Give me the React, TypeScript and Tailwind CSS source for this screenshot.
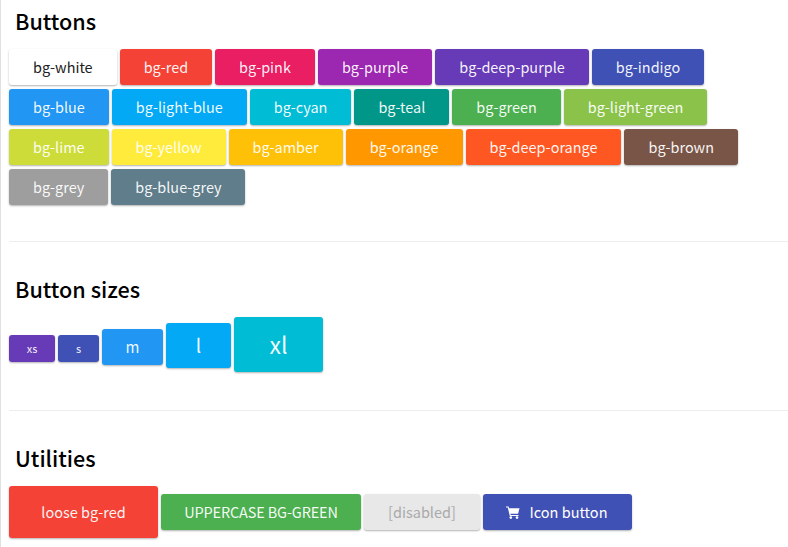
const rows = [
  { label: "bg-white", cls: "bg-white text-[#212121]" },
  { label: "bg-red", cls: "bg-[#f44336] text-white/95" },
  { label: "bg-pink", cls: "bg-[#e91e63] text-white/95" },
  { label: "bg-purple", cls: "bg-[#9c27b0] text-white/95" },
  { label: "bg-deep-purple", cls: "bg-[#673ab7] text-white/95" },
  { label: "bg-indigo", cls: "bg-[#3f51b5] text-white/95" },
  { label: "bg-blue", cls: "bg-[#2196f3] text-white/95" },
  { label: "bg-light-blue", cls: "bg-[#03a9f4] text-white/95" },
  { label: "bg-cyan", cls: "bg-[#00bcd4] text-white/95" },
  { label: "bg-teal", cls: "bg-[#009688] text-white/95" },
  { label: "bg-green", cls: "bg-[#4caf50] text-white/95" },
  { label: "bg-light-green", cls: "bg-[#8bc34a] text-white/95" },
  { label: "bg-lime", cls: "bg-[#cddc39] text-white/95" },
  { label: "bg-yellow", cls: "bg-[#ffeb3b] text-white/95" },
  { label: "bg-amber", cls: "bg-[#ffc107] text-white/95" },
  { label: "bg-orange", cls: "bg-[#ff9800] text-white/95" },
  { label: "bg-deep-orange", cls: "bg-[#ff5722] text-white/95" },
  { label: "bg-brown", cls: "bg-[#795548] text-white/95" },
  { label: "bg-grey", cls: "bg-[#9e9e9e] text-white/95" },
  { label: "bg-blue-grey", cls: "bg-[#607d8b] text-white/95" },
];

const base =
  "flex items-center justify-center rounded-[3px] shadow-[0_1px_2px_rgba(0,0,0,0.3)]";

const Heading = ({ title }: { title: string }) => (
  <h2 className="pl-[6px] text-[21.6px] font-medium leading-[30px] text-black">
    {title}
  </h2>
);

const CartIcon = () => (
  <svg width="14" height="13" viewBox="0 0 14 13" fill="currentColor">
    <path d="M0 0.5h2.6l.5 1.7H13.5l-1.4 5.6H4.4l.3 1.2h7.8v1.1H3.8L1.8 1.6H0z" />
    <circle cx="4.8" cy="11.6" r="1.3" />
    <circle cx="11" cy="11.6" r="1.3" />
  </svg>
);

const App = () => {
  return (
    <div
      className="h-[547px] w-[788px] overflow-hidden border-l border-[#e0e0e0] bg-white pl-2"
      style={{ fontFamily: '"Noto Sans CJK SC", "Noto Sans", sans-serif' }}
    >
      <div className="pt-[6px]">
        <Heading title="Buttons" />
        <div className="mt-[13px] flex flex-wrap gap-x-[3px] gap-y-1">
          {rows.map((b) => (
            <button key={b.label} className={`${base} h-9 px-6 text-[14.45px] ${b.cls}`}>
              {b.label}
            </button>
          ))}
        </div>
      </div>

      <hr className="mt-9 border-[#eeeeee]" />

      <div className="pt-8">
        <Heading title="Button sizes" />
        <div className="mt-[13px] flex items-start gap-x-[3px]">
          <button className={`${base} mt-[18px] h-[27px] w-[46px] bg-[#673ab7] text-[11px] text-white/95`}>xs</button>
          <button className={`${base} mt-[18px] h-[27px] w-[41px] bg-[#3f51b5] text-[11px] text-white/95`}>s</button>
          <button className={`${base} mt-3 h-9 w-[61px] bg-[#2196f3] text-[15px] text-white/95`}>m</button>
          <button className={`${base} mt-[6px] h-[45px] w-[65px] bg-[#03a9f4] text-[19px] text-white/95`}>l</button>
          <button className={`${base} h-[55px] w-[89px] bg-[#00bcd4] text-[23px] text-white/95`}>xl</button>
        </div>
      </div>

      <hr className="mt-[38px] border-[#eeeeee]" />

      <div className="pt-8">
        <Heading title="Utilities" />
        <div className="mt-[13px] flex items-center gap-x-[3px]">
          <button className={`${base} h-[52px] w-[149px] bg-[#f44336] text-[14.5px] text-white/95`}>loose bg-red</button>
          <button className={`${base} h-9 w-[200px] bg-[#4caf50] text-[14.5px] tracking-[-0.15px] text-white/95`}>UPPERCASE BG-GREEN</button>
          <button className={`${base} h-9 w-[116px] bg-[#e8e8e8] text-[14.5px] text-[#aaaaaa]`}>[disabled]</button>
          <button className={`${base} h-9 w-[149px] gap-[10px] bg-[#3f51b5] pr-[2px] text-[14.5px] text-white`}>
            <CartIcon />
            Icon button
          </button>
        </div>
      </div>
    </div>
  );
};

export default App;
